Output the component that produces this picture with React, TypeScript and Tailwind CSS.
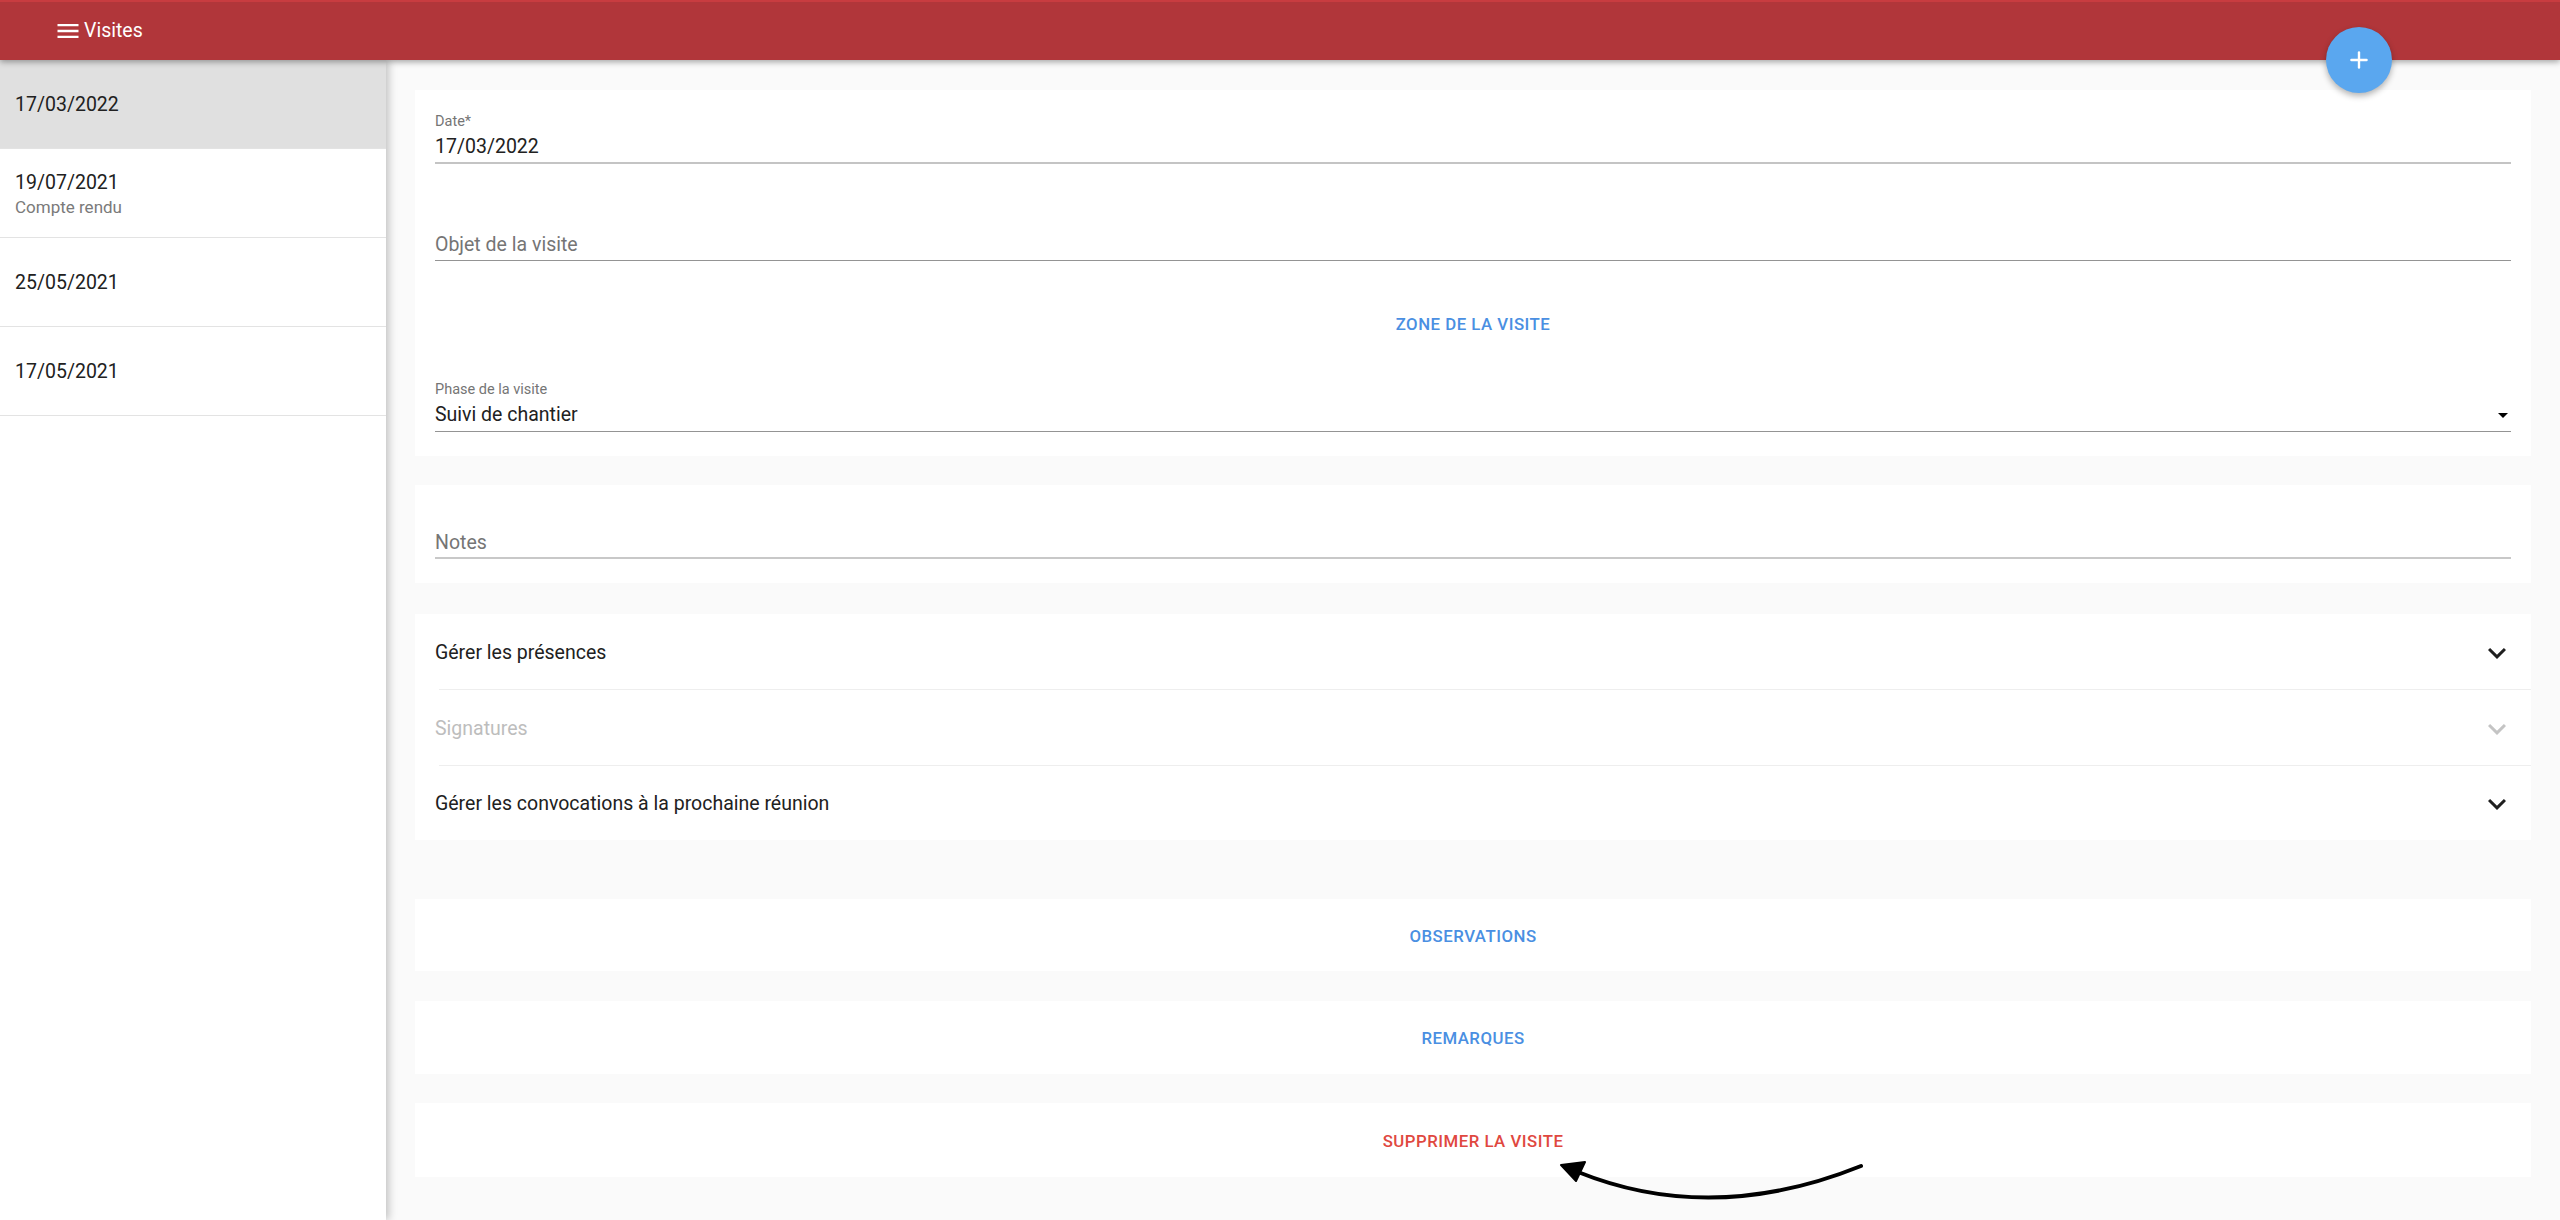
import { Plus } from "lucide-react";

const visits = [
  { date: "17/03/2022", sub: null, active: true },
  { date: "19/07/2021", sub: "Compte rendu", active: false },
  { date: "25/05/2021", sub: null, active: false },
  { date: "17/05/2021", sub: null, active: false },
];

function MenuIcon() {
  return (
    <svg viewBox="0 0 24 24" className="h-[28px] w-[28px] fill-white">
      <path d="M3 18h18v-2H3v2zm0-5h18v-2H3v2zm0-7v2h18V6H3z" />
    </svg>
  );
}

function ExpandMore({ disabled }: { disabled?: boolean }) {
  return (
    <svg viewBox="0 0 24 24" className={disabled ? "h-[36px] w-[36px] fill-[#c4c4c4]" : "h-[36px] w-[36px] fill-[#1f1f1f]"}>
      <path d="M16.59 8.59L12 13.17 7.41 8.59 6 10l6 6 6-6z" />
    </svg>
  );
}

function ArrowDropDown() {
  return (
    <svg viewBox="0 0 24 24" className="h-[24px] w-[24px] fill-black">
      <path d="M7 10l5 5 5-5z" />
    </svg>
  );
}

function CardButton({ label, danger }: { label: string; danger?: boolean }) {
  return (
    <button
      type="button"
      className={
        "flex w-full items-center justify-center pt-[3px] text-[16.8px] font-medium uppercase tracking-[0.5px] " +
        (danger ? "text-[#e0483f]" : "text-[#4a8fe2]")
      }
    >
      {label}
    </button>
  );
}

export default function App() {
  return (
    <div className="relative flex h-[1220px] flex-col overflow-hidden font-['Roboto',sans-serif]">
      <header className="relative z-20 flex h-[60px] shrink-0 items-center border-t-2 border-[#c83c40] bg-[#b1363a] pl-[54px] shadow-[0_2px_6px_rgba(0,0,0,0.35)]">
        <MenuIcon />
        <span className="ml-[2px] text-[19.5px] text-white">Visites</span>
      </header>

      <div className="flex min-h-0 flex-1">
        <aside className="relative z-10 w-[386px] shrink-0 bg-white shadow-[3px_0_8px_rgba(0,0,0,0.22)]">
          {visits.map((v) => (
            <div
              key={v.date}
              className={
                "flex h-[89px] flex-col justify-center border-b border-[#e3e3e3] px-[15px] pt-[2px] " +
                (v.active ? "bg-[#e0e0e0]" : "bg-white")
              }
            >
              <span className="text-[19.5px] leading-[26px] text-[#212121]">{v.date}</span>
              {v.sub ? <span className="text-[17px] leading-[22px] text-[#7a7a7a]">{v.sub}</span> : null}
            </div>
          ))}
        </aside>

        <main className="flex flex-1 flex-col bg-[#fafafa] px-[29px] pt-[30px]">
          <section className="bg-white px-[20px] pb-[24px] pt-[24px]">
            <div className="border-b-2 border-[#c4c4c4] pb-[3px]">
              <div className="text-[14.5px] leading-[16px] text-[#757575]">Date*</div>
              <div className="mt-[5px] text-[19.5px] leading-[24px] text-[#212121]">17/03/2022</div>
            </div>
            <div className="mt-[47px] border-b border-[#949494] pb-[3px] pt-[22px]">
              <div className="text-[19.5px] leading-[24px] text-[#757575]">Objet de la visite</div>
            </div>
            <div className="mt-[42px] flex h-[40px]">
              <CardButton label="Zone de la visite" />
            </div>
            <div className="mt-[39px] border-b border-[#949494] pb-[4px]">
              <div className="text-[14.5px] leading-[16px] text-[#757575]">Phase de la visite</div>
              <div className="mt-[5px] flex items-center justify-between">
                <span className="text-[19.5px] leading-[24px] text-[#212121]">Suivi de chantier</span>
                <span className="-mr-[4px]">
                  <ArrowDropDown />
                </span>
              </div>
            </div>
          </section>

          <section className="mt-[29px] bg-white px-[20px] pb-[24px] pt-[46px]">
            <div className="border-b-2 border-[#c8c8c8] pb-[2px]">
              <div className="text-[19.5px] leading-[24px] text-[#757575]">Notes</div>
            </div>
          </section>

          <section className="mt-[31px] bg-white">
            <div className="flex h-[75px] items-center justify-between pl-[20px] pr-[16px] pt-[2px]">
              <span className="text-[19.5px] text-[#212121]">Gérer les présences</span>
              <ExpandMore />
            </div>
            <div className="ml-[24px] border-t border-[#eeeeee]" />
            <div className="flex h-[75px] items-center justify-between pl-[20px] pr-[16px] pt-[2px]">
              <span className="text-[19.5px] text-[#bdbdbd]">Signatures</span>
              <ExpandMore disabled />
            </div>
            <div className="ml-[24px] border-t border-[#eeeeee]" />
            <div className="flex h-[74px] items-center justify-between pl-[20px] pr-[16px] pt-[2px]">
              <span className="text-[19.5px] text-[#212121]">Gérer les convocations à la prochaine réunion</span>
              <ExpandMore />
            </div>
          </section>

          <section className="mt-[59px] flex h-[72px] bg-white">
            <CardButton label="Observations" />
          </section>
          <section className="mt-[30px] flex h-[73px] bg-white">
            <CardButton label="Remarques" />
          </section>
          <section className="mt-[29px] flex h-[74px] bg-white">
            <CardButton label="Supprimer la visite" danger />
          </section>
        </main>
      </div>

      <button
        type="button"
        className="absolute left-[2326px] top-[27px] z-30 flex h-[66px] w-[66px] items-center justify-center rounded-full bg-[#5aa7ef] shadow-[0_3px_6px_rgba(0,0,0,0.3)]"
      >
        <Plus className="h-[26px] w-[26px] text-white" strokeWidth={2.2} />
      </button>

      <svg className="pointer-events-none absolute inset-0 z-40 h-[1220px] w-[2560px]" viewBox="0 0 2560 1220">
        <path d="M1861 1166 Q1712 1226 1578 1172" fill="none" stroke="#000" strokeWidth="4" strokeLinecap="round" />
        <path d="M1561 1165 L1585 1162 L1576 1181 Z" fill="#000" stroke="#000" strokeWidth="2" strokeLinejoin="round" />
      </svg>
    </div>
  );
}
